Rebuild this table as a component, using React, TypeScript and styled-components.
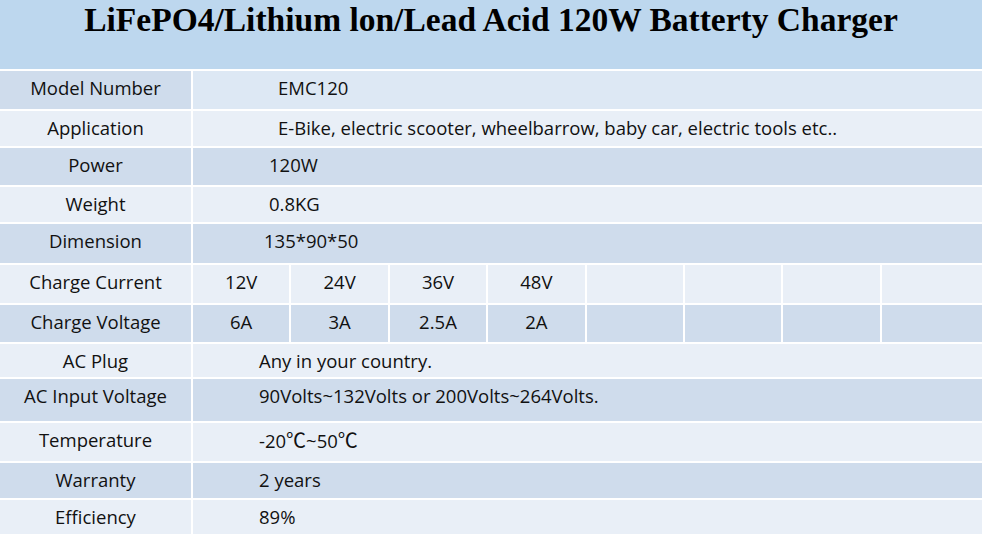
import React from 'react';
import styled, { createGlobalStyle } from 'styled-components';

const GlobalStyle = createGlobalStyle`
  html, body {
    margin: 0;
    padding: 0;
    background: #ffffff;
  }
  body {
    width: 982px;
    height: 542px;
    overflow: hidden;
    font-family: "Open Sans", "Liberation Sans", sans-serif;
    color: #111111;
  }
`;

const DARK = '#cfdcec';
const LIGHT = '#e9eff7';
const MID = '#dde8f4';

interface RowProps {
  $height: number;
  $shade: string;
}

interface CellProps {
  $shade?: string;
  $indent?: number;
}

interface SpecRow {
  label: string;
  value: React.ReactNode;
  height: number;
  dark: boolean;
  indent: number;
}

const Page = styled.div`
  width: 982px;
  height: 542px;
  display: flex;
  flex-direction: column;
  background: #ffffff;
`;

const TitleBar = styled.div`
  height: 69px;
  background: #bdd7ee;
  border-bottom: 2px solid #ffffff;
  text-align: center;
  font-family: "Liberation Serif", "Times New Roman", serif;
  font-weight: bold;
  font-size: 33.5px;
  line-height: 40px;
  color: #000000;
`;

const Table = styled.div`
  display: flex;
  flex-direction: column;
`;

const Row = styled.div<RowProps>`
  display: grid;
  grid-template-columns: 191px 1fr;
  height: ${p => p.$height}px;
  background: ${p => p.$shade};
  border-bottom: 2px solid #ffffff;
  box-sizing: border-box;
  font-size: 18.5px;
  line-height: 24px;
`;

const SplitRow = styled(Row)`
  grid-template-columns: 191px repeat(7, 98.4px) 1fr;
`;

const Label = styled.div<CellProps>`
  text-align: center;
  padding-top: 5px;
  background: ${p => p.$shade || 'transparent'};
  white-space: nowrap;
`;

const Value = styled.div<CellProps>`
  border-left: 2px solid #ffffff;
  padding-top: 5px;
  padding-left: ${p => p.$indent ?? 0}px;
  background: ${p => p.$shade || 'transparent'};
  white-space: nowrap;
`;

const SubCell = styled.div`
  border-left: 2px solid #ffffff;
  padding-top: 5px;
  text-align: center;
`;

const Degree = styled.span`
  font-family: "Noto Sans CJK SC", sans-serif;
  font-size: 20px;
  line-height: 24px;
`;

const topRows: SpecRow[] = [
  { label: 'Application', value: 'E-Bike, electric scooter, wheelbarrow, baby car, electric tools etc..', height: 37, dark: false, indent: 85 },
  { label: 'Power', value: '120W', height: 39, dark: true, indent: 76 },
  { label: 'Weight', value: '0.8KG', height: 37, dark: false, indent: 76 },
  { label: 'Dimension', value: '135*90*50', height: 41, dark: true, indent: 71 },
];

const bottomRows: SpecRow[] = [
  { label: 'AC Plug', value: 'Any in your country.', height: 35, dark: false, indent: 66 },
  { label: 'AC Input Voltage', value: '90Volts~132Volts or 200Volts~264Volts.', height: 44, dark: true, indent: 66 },
  {
    label: 'Temperature',
    value: <>-20<Degree>℃</Degree>~50<Degree>℃</Degree></>,
    height: 40,
    dark: false,
    indent: 66,
  },
  { label: 'Warranty', value: '2 years', height: 37, dark: true, indent: 66 },
  { label: 'Efficiency', value: '89%', height: 36, dark: false, indent: 66 },
];

const currents = ['12V', '24V', '36V', '48V', '', '', '', ''];
const voltages = ['6A', '3A', '2.5A', '2A', '', '', '', ''];

const renderRow = (row: SpecRow) => (
  <Row key={row.label} $height={row.height} $shade={row.dark ? DARK : LIGHT}>
    <Label>{row.label}</Label>
    <Value $indent={row.indent}>{row.value}</Value>
  </Row>
);

const App: React.FC = () => {
  return (
    <Page>
      <GlobalStyle />
      <TitleBar>LiFePO4/Lithium lon/Lead Acid 120W Batterty Charger</TitleBar>
      <Table>
        <Row $height={40} $shade={MID}>
          <Label $shade={DARK}>Model Number</Label>
          <Value $indent={85}>EMC120</Value>
        </Row>
        {topRows.map(renderRow)}
        <SplitRow $height={40} $shade={LIGHT}>
          <Label>Charge Current</Label>
          {currents.map((c, i) => <SubCell key={i}>{c}</SubCell>)}
        </SplitRow>
        <SplitRow $height={39} $shade={DARK}>
          <Label>Charge Voltage</Label>
          {voltages.map((v, i) => <SubCell key={i}>{v}</SubCell>)}
        </SplitRow>
        {bottomRows.map(renderRow)}
      </Table>
    </Page>
  );
};

export default App;
